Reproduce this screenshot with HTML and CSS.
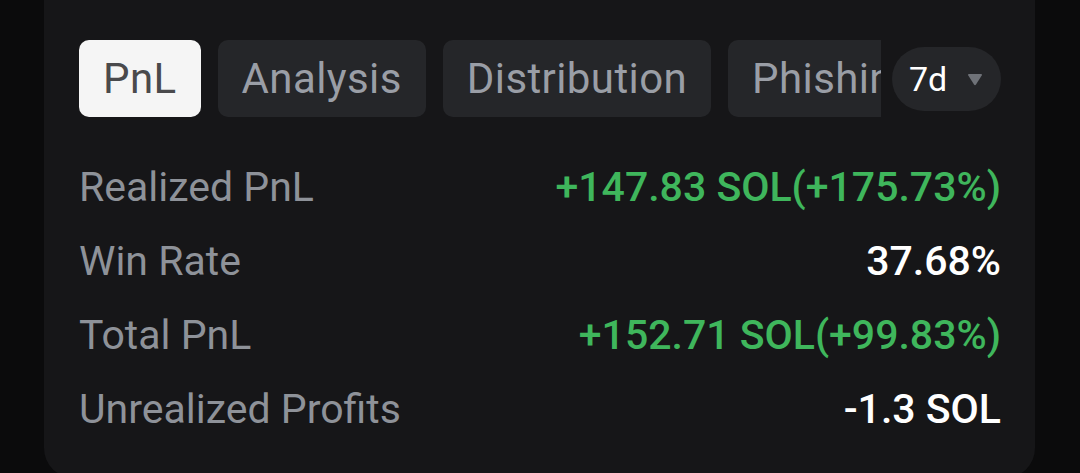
FILE: index.html
```html
<!DOCTYPE html>
<html>
<head>
<meta charset="utf-8">
<link rel="stylesheet" href="styles.css">
</head>
<body>
<div class="card">
  <div class="toolbar">
    <div class="tabs">
      <div class="tab active">PnL</div>
      <div class="tab">Analysis</div>
      <div class="tab">Distribution</div>
      <div class="tab">Phishing</div>
    </div>
    <div class="period">
      <span>7d</span>
      <svg class="caret" width="16" height="13" viewBox="0 0 16 13"><path d="M2 1 H14 Q15.5 1 14.7 2.4 L9 11.6 Q8 13 7 11.6 L1.3 2.4 Q0.5 1 2 1 Z" fill="#6f7278"/></svg>
    </div>
  </div>
  <div class="rows">
    <div class="row"><span class="label">Realized PnL</span><span class="value green">+147.83 SOL(+175.73%)</span></div>
    <div class="row"><span class="label">Win Rate</span><span class="value">37.68%</span></div>
    <div class="row"><span class="label">Total PnL</span><span class="value green">+152.71 SOL(+99.83%)</span></div>
    <div class="row"><span class="label">Unrealized Profits</span><span class="value">-1.3 SOL</span></div>
  </div>
</div>
</body>
</html>
```
FILE: styles.css
```css
html, body {
  margin: 0;
  padding: 0;
  background: #0b0b0c;
  height: 473px;
  overflow: hidden;
  font-family: "Roboto", "Noto Sans", sans-serif;
}
.card {
  margin-left: 44px;
  width: 991px;
  height: 478px;
  background: #161618;
  border-radius: 0 0 30px 30px;
  box-sizing: border-box;
  padding: 40px 34px 0 35px;
}
.toolbar {
  display: flex;
  align-items: center;
  height: 77px;
}
.tabs {
  display: flex;
  gap: 17px;
  width: 802px;
  overflow: hidden;
  flex-shrink: 0;
}
.tab {
  height: 77px;
  box-sizing: border-box;
  padding: 0 24px;
  border-radius: 10px;
  background: #252629;
  color: #9a9ea6;
  font-size: 42px;
  letter-spacing: 0.4px;
  display: flex;
  align-items: center;
  flex-shrink: 0;
  white-space: nowrap;
}
.tab.active {
  background: #f5f5f5;
  color: #4a4a4c;
}
.period {
  margin-left: 11px;
  width: 109px;
  height: 64px;
  border-radius: 32px;
  background: #252629;
  color: #ffffff;
  font-size: 34px;
  display: flex;
  align-items: center;
  box-sizing: border-box;
  padding-left: 17px;
  gap: 20px;
}
.caret { display: block; margin-top: 2px; }
.rows {
  margin-top: 33px;
  display: flex;
  flex-direction: column;
}
.row {
  display: flex;
  justify-content: space-between;
  align-items: center;
  height: 74px;
  font-size: 41px;
}
.label { color: #8e9299; }
.value { color: #ffffff; font-weight: 500; }
.value.green { color: #3fb65c; }
```
